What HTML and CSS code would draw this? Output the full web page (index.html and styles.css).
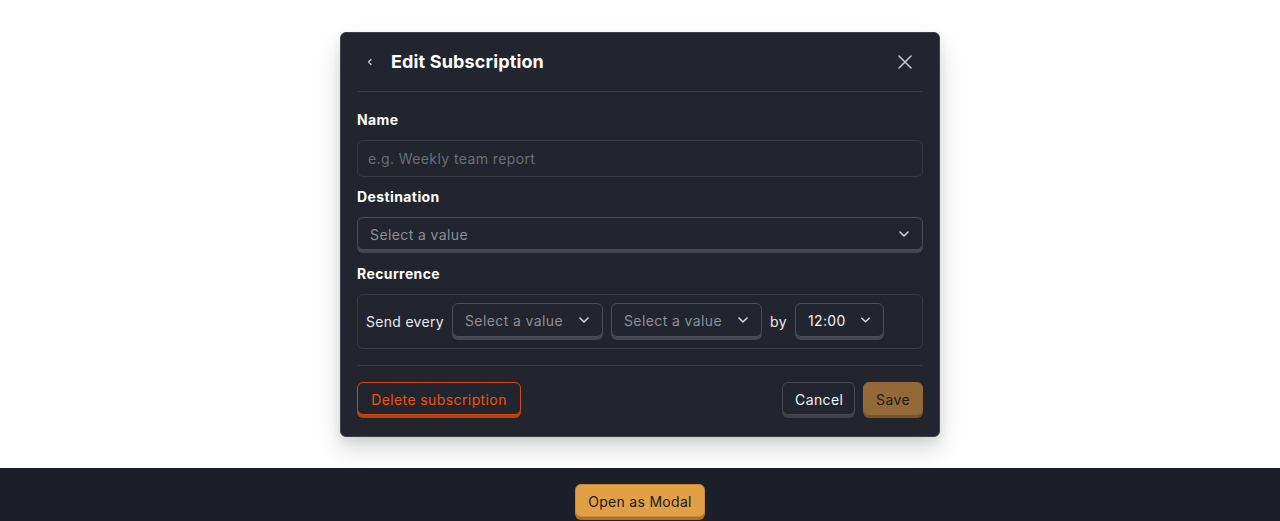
FILE: index.html
```html
<!DOCTYPE html>
<html>
<head>
<meta charset="utf-8">
<link rel="stylesheet" href="styles.css">
</head>
<body>
<div class="stage">
  <div class="modal">
    <div class="modal-header">
      <button class="back-btn" aria-label="Back">
        <svg width="8" height="8" viewBox="0 0 8 8"><path d="M5 1.5 L2.5 4 L5 6.5" fill="none" stroke="#c9cbd0" stroke-width="1.3" stroke-linecap="round" stroke-linejoin="round"/></svg>
      </button>
      <h2 class="title">Edit Subscription</h2>
      <button class="close-btn" aria-label="Close">
        <svg width="16" height="16" viewBox="0 0 16 16"><path d="M2 2 L14 14 M14 2 L2 14" fill="none" stroke="#c9cbd0" stroke-width="1.5" stroke-linecap="round"/></svg>
      </button>
    </div>
    <div class="modal-body">
      <label class="field-label">Name</label>
      <div class="text-input">e.g. Weekly team report</div>
      <label class="field-label">Destination</label>
      <div class="select select-wide">
        <span class="placeholder">Select a value</span>
        <svg class="chev" width="12" height="8" viewBox="0 0 12 8"><path d="M2 2 L6 6 L10 2" fill="none" stroke="#d4d6da" stroke-width="1.6" stroke-linecap="round" stroke-linejoin="round"/></svg>
      </div>
      <label class="field-label">Recurrence</label>
      <div class="recurrence">
        <span class="rec-text">Send every</span>
        <div class="select select-rec">
          <span class="placeholder">Select a value</span>
          <svg class="chev" width="12" height="8" viewBox="0 0 12 8"><path d="M2 2 L6 6 L10 2" fill="none" stroke="#d4d6da" stroke-width="1.6" stroke-linecap="round" stroke-linejoin="round"/></svg>
        </div>
        <div class="select select-rec">
          <span class="placeholder">Select a value</span>
          <svg class="chev" width="12" height="8" viewBox="0 0 12 8"><path d="M2 2 L6 6 L10 2" fill="none" stroke="#d4d6da" stroke-width="1.6" stroke-linecap="round" stroke-linejoin="round"/></svg>
        </div>
        <span class="rec-text">by</span>
        <div class="select select-rec">
          <span class="value">12:00</span>
          <svg class="chev" width="12" height="8" viewBox="0 0 12 8"><path d="M2 2 L6 6 L10 2" fill="none" stroke="#d4d6da" stroke-width="1.6" stroke-linecap="round" stroke-linejoin="round"/></svg>
        </div>
      </div>
    </div>
    <div class="modal-footer">
      <button class="btn btn-danger">Delete subscription</button>
      <div class="footer-right">
        <button class="btn btn-default">Cancel</button>
        <button class="btn btn-save">Save</button>
      </div>
    </div>
  </div>
</div>
<div class="bottom-bar">
  <button class="btn btn-open">Open as Modal</button>
</div>
</body>
</html>
```
FILE: styles.css
```css
* { box-sizing: border-box; }
html, body { margin: 0; padding: 0; }
body {
  background: #ffffff;
  font-family: Inter, "Noto Sans", sans-serif;
  font-size: 14px;
  letter-spacing: 0.4px;
  color: #f1f2f4;
  overflow: hidden;
}
button {
  font-family: inherit;
  font-size: 14px;
  letter-spacing: 0.4px;
  white-space: nowrap;
  cursor: pointer;
}
.stage {
  height: 468px;
  padding-top: 32px;
  display: flex;
  justify-content: center;
  align-items: flex-start;
}
.modal {
  width: 600px;
  background: #22252d;
  border: 1px solid #3d4047;
  border-radius: 6px;
  padding: 0 16px 21px;
  box-shadow: 0 12px 24px rgba(0, 0, 0, 0.16), 0 4px 8px rgba(0, 0, 0, 0.06);
}
.modal-header {
  height: 59px;
  display: flex;
  align-items: center;
  border-bottom: 1px solid #383b42;
  padding-bottom: 1px;
}
.back-btn {
  width: 24px;
  height: 24px;
  margin-left: 1px;
  margin-right: 9px;
  background: none;
  border: none;
  padding: 0;
  display: flex;
  align-items: center;
  justify-content: center;
}
.title {
  margin: 0;
  font-size: 18px;
  font-weight: 700;
  color: #ffffff;
  flex: 1;
  letter-spacing: 0.15px;
}
.close-btn {
  width: 24px;
  height: 24px;
  margin-right: 6px;
  background: none;
  border: none;
  padding: 0;
  display: flex;
  align-items: center;
  justify-content: center;
}
.modal-body {
  display: flex;
  flex-direction: column;
  padding-top: 18px;
}
.field-label {
  font-size: 14px;
  font-weight: 700;
  line-height: 20px;
  color: #ffffff;
  margin-bottom: 10px;
}
.text-input {
  height: 37px;
  border: 1px solid #383b42;
  border-radius: 6px;
  padding: 0 10px;
  display: flex;
  align-items: center;
  color: #6b6e76;
  margin-bottom: 10px;
}
.select {
  display: flex;
  align-items: center;
  justify-content: space-between;
  border: 1px solid #4b4e55;
  border-radius: 6px;
  background: #22252d;
  box-shadow: 0 3px 0 #44474e;
}
.select-wide {
  height: 33px;
  padding: 1px 12px 0 12px;
  margin-bottom: 14px;
}
.placeholder { color: #8c8f96; }
.value { color: #f1f2f4; }
.chev { display: block; }
.recurrence {
  border: 1px solid #383b42;
  border-radius: 6px;
  padding: 8px 8px 11px;
  display: flex;
  align-items: center;
  gap: 8px;
  margin-bottom: 16px;
}
.rec-text { color: #e9eaec; padding-top: 2px; }
.recurrence .rec-text:first-child { letter-spacing: 0.3px; }
.select-rec {
  height: 34px;
  padding: 0 12px;
  gap: 14px;
}
.recurrence .select-rec:nth-of-type(1),
.recurrence .select-rec:nth-of-type(2) { width: 151px; }
.recurrence .select-rec:last-child { width: 89px; }
.modal-footer {
  border-top: 1px solid #383b42;
  padding-top: 16px;
  display: flex;
  justify-content: space-between;
  align-items: flex-start;
}
.footer-right {
  display: flex;
  gap: 8px;
}
.btn {
  height: 33px;
  border-radius: 6px;
  padding: 2px 12px 0;
  line-height: 29px;
}
.btn-danger {
  background: #22252d;
  border: 1px solid #d9480f;
  color: #f0520e;
  box-shadow: 0 3px 0 #b2430e;
  width: 164px;
}
.btn-default {
  background: #22252d;
  border: 1px solid #45484f;
  color: #f3f4f6;
  box-shadow: 0 3px 0 #3e4148;
  width: 73px;
}
.btn-save {
  background: #94693a;
  border: 1px solid #94693a;
  color: #221b13;
  box-shadow: 0 3px 0 #7a5428;
  width: 60px;
}
.bottom-bar {
  height: 53px;
  background: #1c1f27;
  display: flex;
  justify-content: center;
  padding-top: 16px;
}
.btn-open {
  background: #e1a045;
  border: 1px solid #c98a33;
  color: #1f1a12;
  box-shadow: 0 3px 0 #a87328;
  width: 130px;
  height: 33px;
  padding: 2px 0 0;
  letter-spacing: 0.3px;
}
```
